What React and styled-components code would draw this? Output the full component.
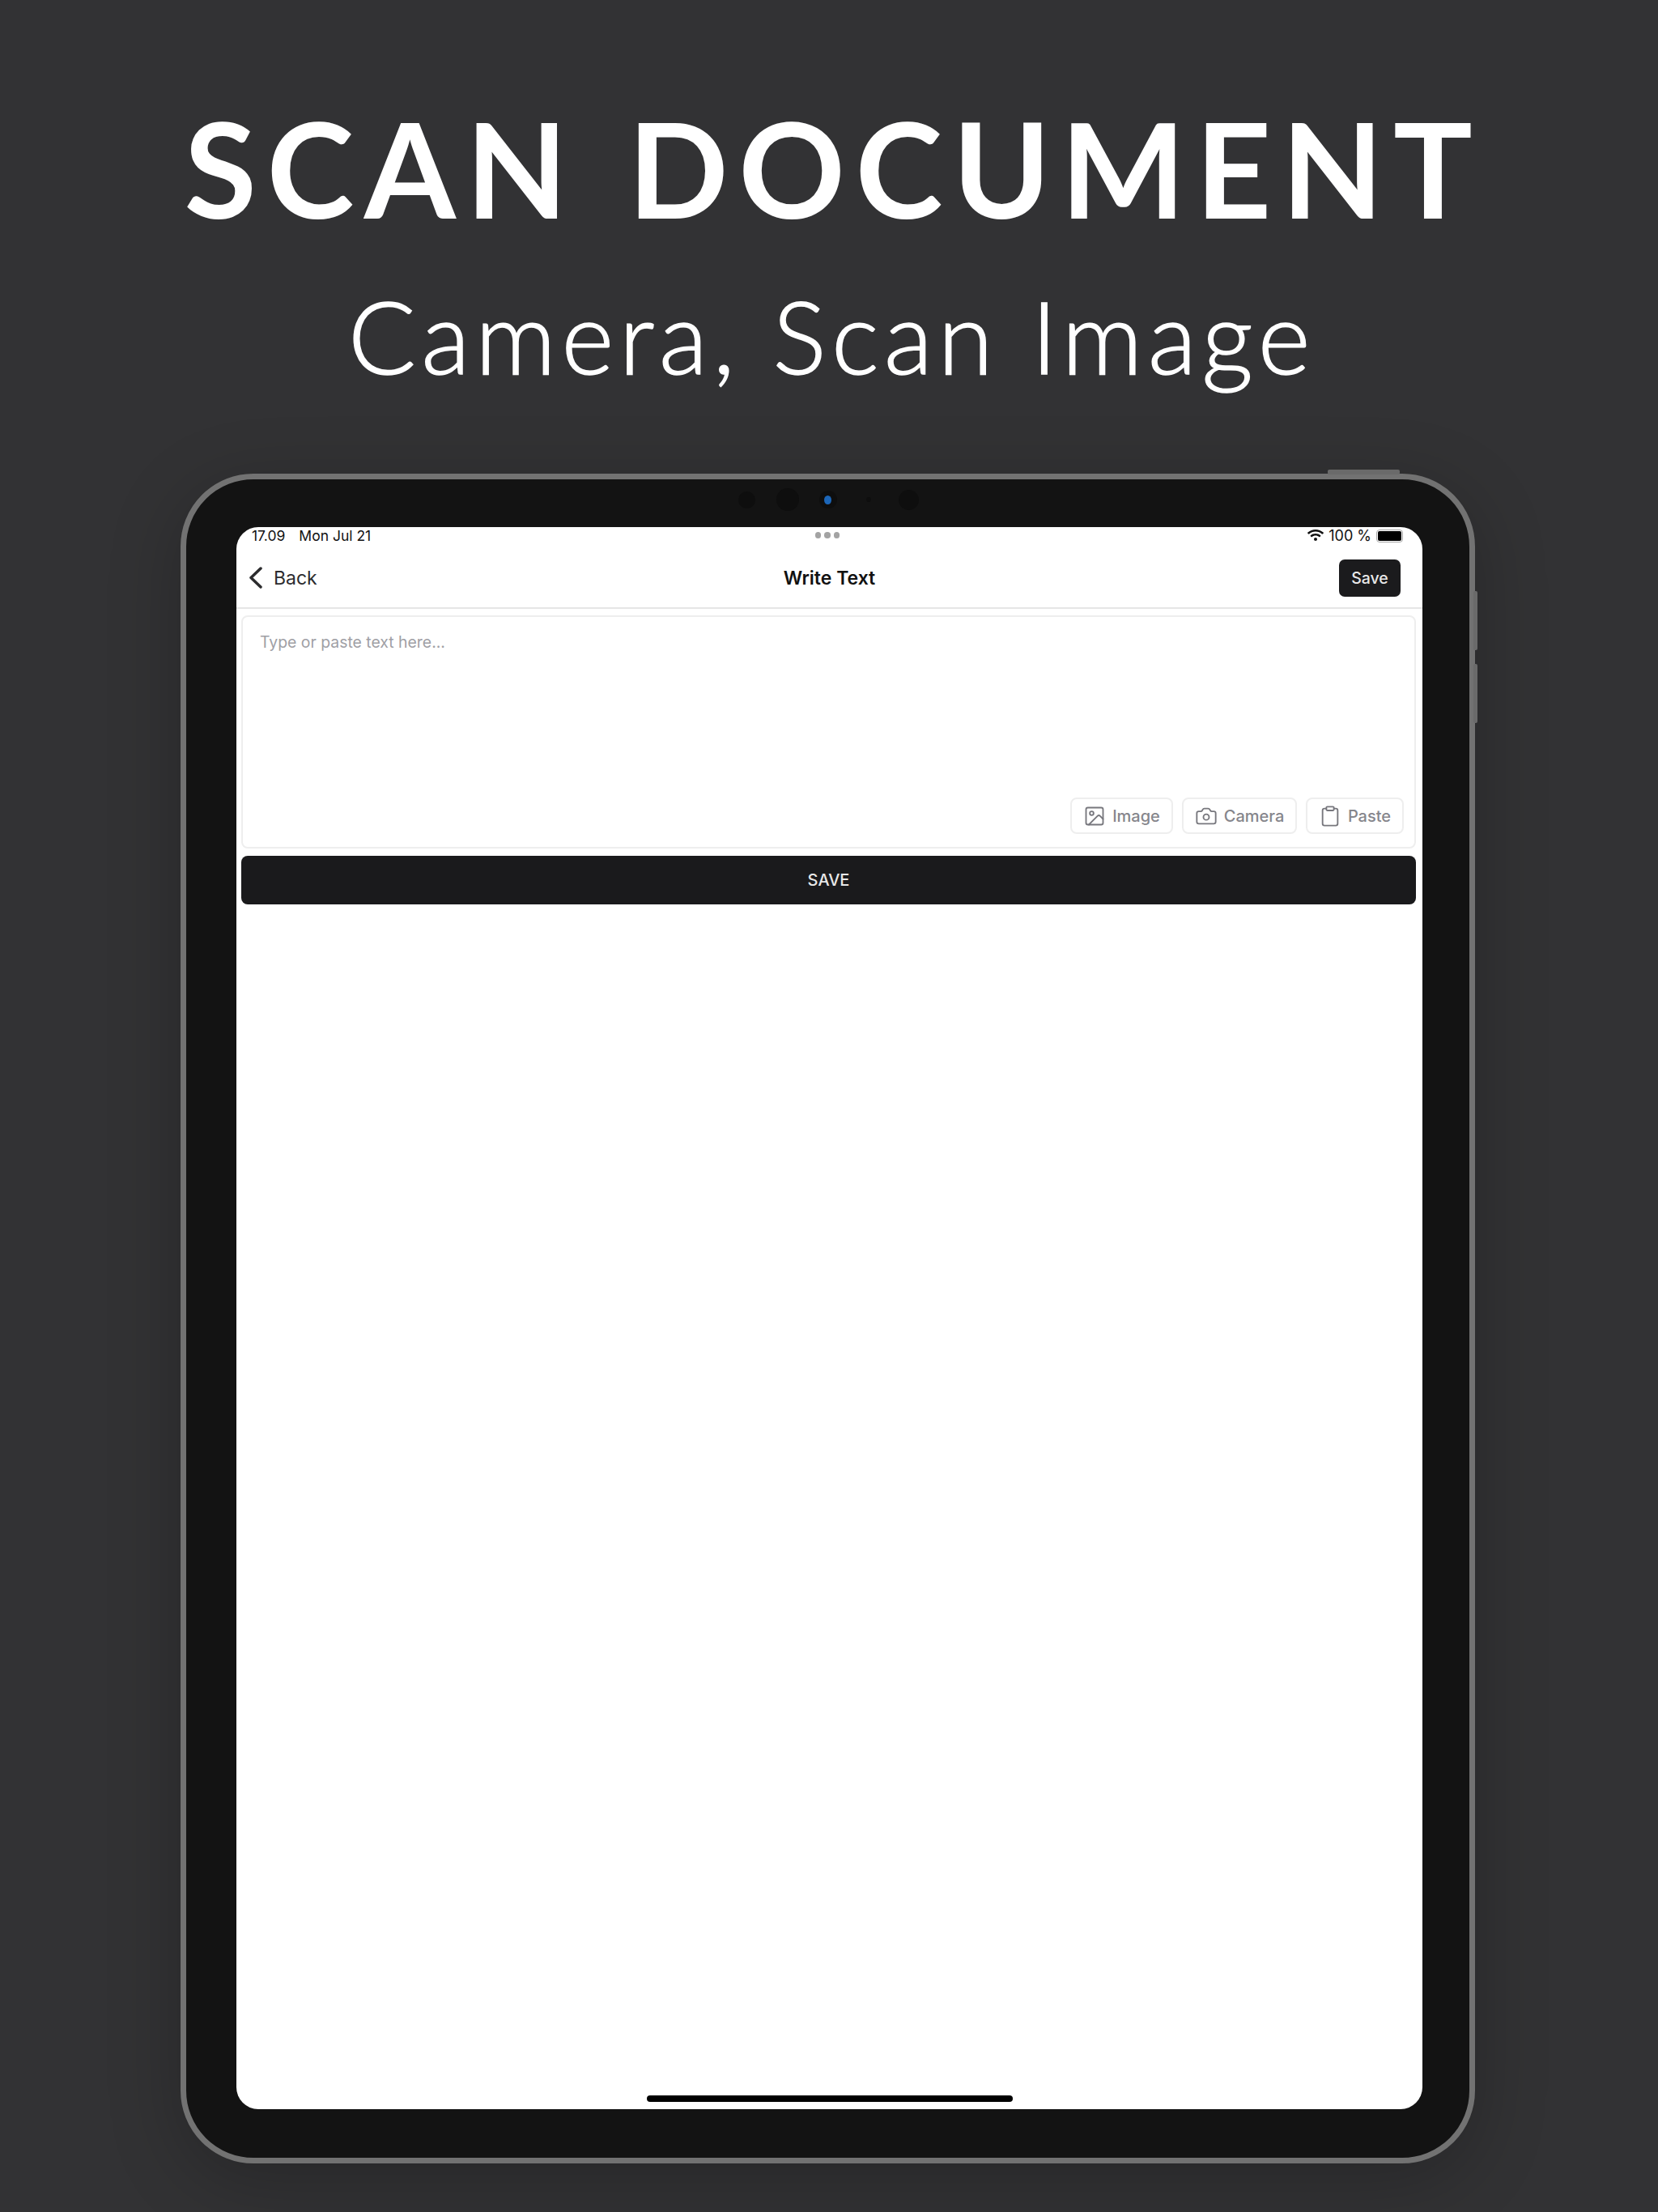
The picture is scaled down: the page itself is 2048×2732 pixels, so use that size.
import styled, { createGlobalStyle } from 'styled-components'
import { Image, Camera, Clipboard } from 'lucide-react'
import { FaWifi } from 'react-icons/fa'

const GlobalStyle = createGlobalStyle`
    html, body {
        margin: 0;
        padding: 0;
        background: #323234;
    }
    * {
        box-sizing: border-box;
    }
`

const Poster = styled.main`
    width: 2048px;
    height: 2732px;
    padding: 0 226px 0 223px;
    display: flex;
    flex-direction: column;
    background: #323234;
    color: #fff;
    overflow: hidden;
`

const Headline = styled.h1`
    margin: 119px -40px 0;
    padding-left: 14px;
    font: 700 163px/176px Lato, sans-serif;
    letter-spacing: 12.5px;
    word-spacing: 10px;
    text-align: center;
    white-space: nowrap;
`

const Subline = styled.h2`
    margin: 54px -40px 0;
    padding-left: 10px;
    font: 300 124px/130px Lato, sans-serif;
    letter-spacing: 6.6px;
    -webkit-text-stroke: 1.5px #fff;
    text-align: center;
    white-space: nowrap;
`

const Device = styled.section`
    position: relative;
    margin-top: 106px;
    height: 2087px;
    padding: 0 58px 60px 62px;
    display: flex;
    flex-direction: column;
    background: #131313;
    border: 7px solid #727272;
    border-radius: 90px;
    box-shadow: 0 20px 90px rgba(0, 0, 0, 0.22);
`

const SideKey = styled.span`
    position: absolute;
    background: #6a6a6a;
    border-radius: 2px;
    top: ${({ $top }) => $top}px;
    left: ${({ $left }) => $left}px;
    width: ${({ $w }) => $w}px;
    height: ${({ $h }) => $h}px;
`

const CameraRow = styled.div`
    height: 50px;
    margin-bottom: 9px;
    padding-right: 4px;
    flex: none;
    display: grid;
    grid-template-columns: repeat(5, 50px);
    justify-content: center;
    justify-items: center;
    align-items: center;
`

const Lens = styled.span`
    display: grid;
    place-items: center;
    width: ${({ $size }) => $size}px;
    height: ${({ $size }) => $size}px;
    border-radius: 50%;
    background: #0e0e0e;
`

const LensDot = styled.span`
    width: 9px;
    height: 11px;
    border-radius: 50%;
    background: #1c66b8;
`

const Screen = styled.div`
    flex: 1;
    display: flex;
    flex-direction: column;
    background: #fff;
    color: #1b1b1d;
    border-radius: 27px;
    overflow: hidden;
    font-family: Inter, sans-serif;
`

const StatusBar = styled.div`
    height: 26px;
    flex: none;
    padding: 0 24px 0 19px;
    display: grid;
    grid-template-columns: 1fr auto 1fr;
    align-items: start;
    font-size: 17.5px;
    line-height: 21px;
    color: #111;
`

const StatusLeft = styled.div`
    display: flex;
    gap: 17px;
`

const StatusDots = styled.div`
    padding-top: 6px;
    display: flex;
    gap: 4px;
`

const StatusDot = styled.span`
    width: 7.5px;
    height: 7.5px;
    border-radius: 50%;
    background: #a3a3a3;
`

const StatusRight = styled.div`
    display: flex;
    justify-content: flex-end;
    gap: 6px;
    font-size: 18px;
    svg {
        margin-top: 0;
    }
`

const Battery = styled.span`
    width: 33px;
    height: 16px;
    margin-top: 3px;
    padding: 1px;
    display: block;
    border: 1.5px solid #a8a8a8;
    border-radius: 4px;
    &::before {
        content: '';
        display: block;
        height: 100%;
        background: #000;
        border-radius: 2px;
    }
`

const NavBar = styled.header`
    height: 75px;
    flex: none;
    padding: 0 27px;
    display: grid;
    grid-template-columns: 1fr auto 1fr;
    align-items: center;
    border-bottom: 2px solid #e6e6e6;
`

const BackLink = styled.div`
    margin-left: -12px;
    display: flex;
    align-items: center;
    gap: 14px;
    font-size: 23px;
    font-weight: 400;
    color: #2c2c2e;
`

const NavTitle = styled.div`
    font-size: 23px;
    font-weight: 600;
    color: #111;
`

const SmallSave = styled.button`
    justify-self: end;
    width: 76px;
    height: 46px;
    padding: 0;
    border: none;
    border-radius: 7px;
    background: #1b1b1d;
    color: #e8e8e8;
    font: 500 19.5px Inter, sans-serif;
`

const Body = styled.div`
    padding: 8px 8px 0 6px;
    display: flex;
    flex-direction: column;
    gap: 9px;
`

const Card = styled.div`
    height: 288px;
    padding: 18px 13px 16px 21px;
    display: flex;
    flex-direction: column;
    justify-content: space-between;
    border: 2px solid #eeeeee;
    border-radius: 8px;
`

const Placeholder = styled.div`
    font-size: 19.4px;
    line-height: 26px;
    color: #a0a0a5;
`

const Tools = styled.div`
    display: flex;
    justify-content: flex-end;
    gap: 11px;
`

const ToolButton = styled.button`
    width: ${({ $width }) => $width}px;
    height: 45px;
    padding: 0;
    display: flex;
    align-items: center;
    justify-content: center;
    gap: 8px;
    background: #fff;
    border: 2px solid #eeeeee;
    border-radius: 8px;
    color: #86868c;
    font: 500 20px Inter, sans-serif;
    svg {
        color: #77777d;
    }
`

const WideSave = styled.button`
    height: 60px;
    border: none;
    border-radius: 8px;
    background: #1a1a1c;
    color: #e8e8e8;
    font: 500 20px Inter, sans-serif;
`

const HomeBar = styled.div`
    align-self: center;
    width: 452px;
    height: 8px;
    margin: auto 0 9px;
    flex: none;
    background: #000;
    border-radius: 4px;
`

const tools = [
    { label: 'Image', icon: Image, width: 127 },
    { label: 'Camera', icon: Camera, width: 142 },
    { label: 'Paste', icon: Clipboard, width: 121 },
]

const BackChevron = () => (
    <svg width="17" height="27" viewBox="0 0 17 27" fill="none">
        <path d="M15 2 L3 13.5 L15 25" stroke="currentColor" strokeWidth="3.5" strokeLinecap="round" strokeLinejoin="round" />
    </svg>
)

const App = () => {
    return (
        <Poster>
            <GlobalStyle />
            <Headline>SCAN DOCUMENT</Headline>
            <Subline>Camera, Scan Image</Subline>

            <Device>
                <SideKey $top={-12} $left={1410} $w={89} $h={6} />
                <SideKey $top={138} $left={1590} $w={5} $h={73} />
                <SideKey $top={228} $left={1590} $w={5} $h={73} />

                <CameraRow>
                    <Lens $size={21} />
                    <Lens $size={28} />
                    <Lens $size={22}><LensDot /></Lens>
                    <Lens $size={6} />
                    <Lens $size={25} />
                </CameraRow>

                <Screen>
                    <StatusBar>
                        <StatusLeft>
                            <span>17.09</span>
                            <span>Mon Jul 21</span>
                        </StatusLeft>
                        <StatusDots>
                            <StatusDot />
                            <StatusDot />
                            <StatusDot />
                        </StatusDots>
                        <StatusRight>
                            <FaWifi size={20} />
                            <span>100 %</span>
                            <Battery />
                        </StatusRight>
                    </StatusBar>

                    <NavBar>
                        <BackLink>
                            <BackChevron />
                            <span>Back</span>
                        </BackLink>
                        <NavTitle>Write Text</NavTitle>
                        <SmallSave>Save</SmallSave>
                    </NavBar>

                    <Body>
                        <Card>
                            <Placeholder>Type or paste text here...</Placeholder>
                            <Tools>
                                {tools.map(({ label, icon: Icon, width }) => (
                                    <ToolButton key={label} $width={width}>
                                        <Icon size={28} strokeWidth={1.6} />
                                        {label}
                                    </ToolButton>
                                ))}
                            </Tools>
                        </Card>
                        <WideSave>SAVE</WideSave>
                    </Body>

                    <HomeBar />
                </Screen>
            </Device>
        </Poster>
    )
}

export default App
